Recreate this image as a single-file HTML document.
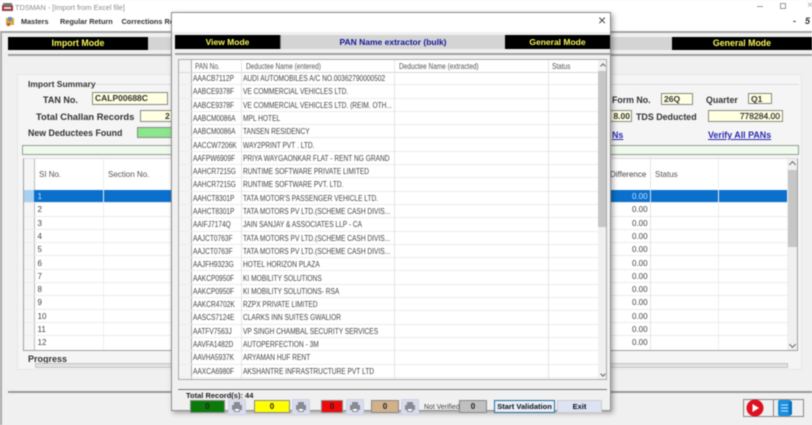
<!DOCTYPE html>
<html><head><meta charset="utf-8"><style>
html,body{margin:0;padding:0;width:812px;height:425px;overflow:hidden;background:#f0f0f0;font-family:"Liberation Sans",sans-serif;color:#222}
.a{position:absolute;white-space:nowrap}
.b{font-weight:bold}
#root{position:absolute;left:0;top:0;width:812px;height:425px;overflow:hidden;filter:blur(.4px)}
.inp{position:absolute;background:#ffffe1;border:1px solid #8a8a8a;box-sizing:border-box;font:bold 8.5px "Liberation Sans",sans-serif;color:#333;line-height:11px;white-space:nowrap}
.r{position:absolute;left:0;width:100%;height:13.3px;border-bottom:1px solid #ececec;box-sizing:border-box}
.r span{position:absolute;top:1px;font-size:8px;line-height:11px;color:#444;white-space:nowrap;transform:scaleX(.825);transform-origin:0 0}
.m{position:absolute;left:0;width:100%;height:13.3px;border-bottom:1px solid #ececec;box-sizing:border-box}
.m span{position:absolute;top:1px;font-size:8px;line-height:12px;color:#444}
.v{position:absolute;width:1px;background:#e4e4e4}
.pr{position:absolute;width:18px;height:16px;background:#d8dcec;border:1px solid #cfd3e3;box-sizing:border-box}
.pr svg{display:block;margin:1px auto}
.col{position:absolute;top:400px;height:13px;border:1px solid #888;box-sizing:border-box;text-align:center;font:bold 8px/11px "Liberation Sans",sans-serif;color:#222}
.h{font-size:8px;line-height:11px;color:#555;transform:scaleX(.81);transform-origin:0 0}
</style></head><body><div id="root">

<div class="a" style="left:0;top:0;width:812px;height:31px;background:#fff"></div>
<svg class="a" style="left:1px;top:2px" width="13" height="11"><rect x="1" y="3" width="11" height="6" fill="#9a3a3a"/><rect x="2" y="1" width="9" height="3" fill="#777"/><rect x="3" y="5" width="7" height="2" fill="#e8d8d8"/></svg>
<div class="a" style="left:15px;top:2px;font-size:7.3px;line-height:11px;color:#8b8b8b">TDSMAN - [Import from Excel file]</div>
<svg class="a" style="left:5px;top:17px" width="10" height="10"><rect x="1" y="1" width="8" height="7" fill="#d9a93a"/><rect x="3" y="0" width="4" height="4" fill="#6b8ac0"/><rect x="2" y="6" width="3" height="3" fill="#c05a3a"/></svg>
<div class="a b" style="left:21px;top:16px;font-size:7.3px;line-height:11px;color:#333">Masters</div>
<div class="a b" style="left:60px;top:16px;font-size:7.3px;line-height:11px;color:#333">Regular Return</div>
<div class="a b" style="left:121.5px;top:16px;font-size:7.3px;line-height:11px;color:#333">Corrections Re</div>
<div class="a" style="left:757px;top:6px;width:6px;height:1px;background:#999"></div>
<div class="a" style="left:780px;top:3px;width:6px;height:6px;border:1px solid #999;box-sizing:border-box"></div>
<div class="a" style="left:807px;top:0;font-size:10px;line-height:11px;color:#aaa">×</div>
<div class="a b" style="left:793px;top:16px;font-size:9px;line-height:11px;color:#333">-</div>
<div class="a b" style="left:805px;top:16px;font-size:9px;line-height:11px;color:#333;font-style:italic">5</div>

<div class="a" style="left:0;top:31px;width:812px;height:2px;background:#a5a5a5"></div>
<div class="a" style="left:0;top:31px;width:2px;height:394px;background:#a8a8a8"></div>
<div class="a" style="left:8px;top:37px;width:140px;height:13px;background:#000;color:#f6f65a;font:bold 8.8px/13px 'Liberation Sans',sans-serif;text-align:center">Import Mode</div>
<div class="a" style="left:148px;top:37px;width:524px;height:13px;background:#d4d4d4"></div>
<div class="a" style="left:672px;top:37px;width:140px;height:13px;background:#000;color:#f6f65a;font:bold 8.8px/13px 'Liberation Sans',sans-serif;text-align:center">General Mode</div>
<div class="a" style="left:8px;top:54px;width:804px;height:2px;background:#a0a0a0"></div>

<div class="a" style="left:17px;top:74px;width:785px;height:296px;background:#f5f5f5;border:1px solid #e6e6e6;box-sizing:border-box"></div>
<div class="a" style="left:28px;top:84px;width:771px;height:1px;background:#ddd"></div>
<div class="a b" style="left:28px;top:79px;font-size:8.5px;line-height:11px;background:#f5f5f5;color:#333">Import Summary</div>
<div class="a b" style="left:43px;top:94px;font-size:9px;line-height:12px;color:#333">TAN No.</div>
<div class="inp" style="left:92px;top:92px;width:76px;height:13px;padding-left:2px">CALP00688C</div>
<div class="a b" style="left:36px;top:111px;font-size:9.4px;line-height:12px;color:#333">Total Challan Records</div>
<div class="inp" style="left:140px;top:110px;width:40px;height:12px;padding-left:24px">2</div>
<div class="a b" style="left:28px;top:127px;font-size:8.8px;line-height:12px;color:#333">New Deductees Found</div>
<div class="a" style="left:137px;top:127px;width:40px;height:11px;background:#8ce68c;border:1px solid #888;box-sizing:border-box"></div>

<div class="a b" style="left:612px;top:94px;font-size:8.8px;line-height:12px;color:#333">Form No.</div>
<div class="inp" style="left:661px;top:93px;width:32px;height:12px;padding-left:2px">26Q</div>
<div class="a b" style="left:706px;top:94px;font-size:8.8px;line-height:12px;color:#333">Quarter</div>
<div class="inp" style="left:748px;top:93px;width:24px;height:11px;padding-left:2px">Q1</div>
<div class="inp" style="left:600px;top:110px;width:32px;height:12px;text-align:right;padding-right:1px">8.00</div>
<div class="a b" style="left:636px;top:111px;font-size:8.9px;line-height:12px;color:#333">TDS Deducted</div>
<div class="inp" style="left:708px;top:110px;width:75px;height:12px;text-align:right;padding-right:2px;font-weight:normal;-webkit-text-stroke:.2px #222">778284.00</div>
<div class="a b" style="left:612px;top:130px;font-size:8.9px;line-height:11px;color:#2a2ab0;text-decoration:underline">Ns</div>
<div class="a b" style="left:708px;top:130px;font-size:8.9px;line-height:11px;color:#2a2ab0;text-decoration:underline">Verify All PANs</div>

<div class="a" style="left:22px;top:145px;width:777px;height:10px;background:#eefaea;border:1px solid #999;box-sizing:border-box"></div>

<!-- main grid -->
<div class="a" style="left:23px;top:158px;width:775px;height:193px;background:#fff;border:1px solid #a0a0a0;border-top-color:#ddd;box-sizing:border-box;overflow:hidden">
  <div class="a" style="left:0;top:0;width:10px;height:191px;background:#f6f6f6"></div>
  <div class="a" style="left:0;top:31px;width:10px;height:13px;background:#a9d0f0"></div>
  <div class="a" style="left:10px;top:0;width:1px;height:191px;background:#bbb"></div>
  <div class="a" style="left:10px;top:31px;width:753px;height:13px;background:#0a70cc"></div>
  <div class="a" style="left:15px;top:10px;font-size:8px;line-height:12px;color:#555">SI No.</div>
  <div class="a" style="left:84px;top:10px;font-size:8px;line-height:12px;color:#555">Section No.</div>
  <div class="a" style="left:586px;top:10px;font-size:8px;line-height:12px;color:#444">Difference</div>
  <div class="a" style="left:631px;top:10px;font-size:8px;line-height:12px;color:#555">Status</div>
  <div class="a" style="left:0;top:31px;width:763px;height:160px">
    <div class="m" style="top:0"><span style="left:13.5px;color:#bfe0ff">1</span><span style="left:608px;color:#bfe0ff">0.00</span></div>
    <div class="m" style="top:13.3px"><span style="left:13.5px">2</span><span style="left:608px">0.00</span></div>
    <div class="m" style="top:26.6px"><span style="left:13.5px">3</span><span style="left:608px">0.00</span></div>
    <div class="m" style="top:39.9px"><span style="left:13.5px">4</span><span style="left:608px">0.00</span></div>
    <div class="m" style="top:53.2px"><span style="left:13.5px">5</span><span style="left:608px">0.00</span></div>
    <div class="m" style="top:66.5px"><span style="left:13.5px">6</span><span style="left:608px">0.00</span></div>
    <div class="m" style="top:79.8px"><span style="left:13.5px">7</span><span style="left:608px">0.00</span></div>
    <div class="m" style="top:93.1px"><span style="left:13.5px">8</span><span style="left:608px">0.00</span></div>
    <div class="m" style="top:106.4px"><span style="left:13.5px">9</span><span style="left:608px">0.00</span></div>
    <div class="m" style="top:119.7px"><span style="left:13.5px">10</span><span style="left:608px">0.00</span></div>
    <div class="m" style="top:133px"><span style="left:13.5px">11</span><span style="left:608px">0.00</span></div>
    <div class="m" style="top:146.3px;border:0"><span style="left:13.5px">12</span><span style="left:608px">0.00</span></div>
  </div>
  <div class="v" style="left:79px;top:0;height:191px;background:#eee"></div>
  <div class="v" style="left:626px;top:0;height:191px"></div>
  <div class="v" style="left:694px;top:0;height:191px;background:#eee"></div>
  <div class="a" style="left:763px;top:0;width:11px;height:191px;background:#f0f0f0"></div>
  <div class="a" style="left:764px;top:11px;width:9px;height:77px;background:#c6c6c6"></div>
  <div class="a" style="left:766px;top:3px;width:4px;height:4px;border-left:1px solid #666;border-top:1px solid #666;transform:rotate(45deg)"></div>
  <div class="a" style="left:766px;top:183px;width:4px;height:4px;border-right:1px solid #666;border-bottom:1px solid #666;transform:rotate(45deg)"></div>
</div>

<div class="a b" style="left:28px;top:353px;font-size:9px;line-height:12px;color:#333">Progress</div>
<div class="a" style="left:35px;top:363px;width:753px;height:5px;background:#e2e2e2;border:1px solid #c4c4c4;box-sizing:border-box"></div>
<div class="a" style="left:8px;top:391px;width:804px;height:2px;background:#999"></div>
<div class="a" style="left:743px;top:399px;width:31px;height:18px;border:1px solid #888;box-sizing:border-box"></div>
<div class="a" style="left:773px;top:399px;width:31px;height:18px;border:1px solid #888;box-sizing:border-box"></div>
<svg class="a" style="left:746px;top:399px" width="18" height="18"><circle cx="9" cy="9" r="8.5" fill="#e01020"/><path d="M6.5 5 L13 9 L6.5 13Z" fill="#fff"/></svg>
<svg class="a" style="left:778px;top:399px" width="16" height="18"><rect x="0" y="1" width="13" height="16" rx="2" fill="#1890e0"/><rect x="11" y="2" width="3" height="14" rx="1" fill="#0a70c0"/><path d="M3 6h7M3 9h7M3 12h7" stroke="#cfe8ff"/></svg>

<!-- dialog -->
<div class="a" style="left:171px;top:12px;width:440px;height:399px;background:#f0f0f0;border:1px solid #8c8c8c;box-sizing:border-box;box-shadow:2px 2px 5px rgba(0,0,0,.35);overflow:hidden">
  <div class="a" style="left:0;top:0;width:438px;height:19px;background:#fff"></div>
  <div class="a" style="left:426px;top:0;font-size:14px;line-height:14px;color:#444">×</div>
  <div class="a" style="left:3px;top:22px;width:105px;height:14px;background:#000;color:#f6f65a;font:bold 8.5px/14px 'Liberation Sans',sans-serif;text-align:center">View Mode</div>
  <div class="a" style="left:108px;top:22px;width:225px;height:14px;background:#d4d4d4;border-left:1px solid #888;box-sizing:border-box;color:#16169a;font:bold 8.5px/14px 'Liberation Sans',sans-serif;text-align:center">PAN Name extractor (bulk)</div>
  <div class="a" style="left:333px;top:22px;width:105px;height:14px;background:#000;color:#f6f65a;font:bold 8.5px/14px 'Liberation Sans',sans-serif;text-align:center">General Mode</div>
  <div class="a" style="left:3px;top:40px;width:435px;height:2px;background:#a0a0a0"></div>

  <div class="a" style="left:6px;top:46px;width:429px;height:321px;background:#fff;border:1px solid #aaa;box-sizing:border-box;overflow:hidden">
    <div class="a" style="left:0;top:0;width:12px;height:320px;background:#f4f4f4"></div>
    <div class="a" style="left:12px;top:0;width:1px;height:320px;background:#aaa"></div>
    <div class="a h" style="left:16px;top:1px">PAN No.</div>
    <div class="a h" style="left:67px;top:1px">Deductee Name (entered)</div>
    <div class="a h" style="left:220px;top:1px">Deductee Name (extracted)</div>
    <div class="a h" style="left:373px;top:1px">Status</div>
    <div class="a" style="left:0;top:12px;width:419px;height:1px;background:#d8d8d8"></div>
    <div class="a" style="left:0;top:12px;width:419px;height:306px">
      <div class="r" style="top:0"><span style="left:13.5px">AAACB7112P</span><span style="left:64px">AUDI AUTOMOBILES A/C NO.00362790000502</span></div>
      <div class="r" style="top:13.3px"><span style="left:13.5px">AABCE9378F</span><span style="left:64px">VE COMMERCIAL VEHICLES LTD.</span></div>
      <div class="r" style="top:26.6px"><span style="left:13.5px">AABCE9378F</span><span style="left:64px">VE COMMERCIAL VEHICLES LTD. (REIM. OTH...</span></div>
      <div class="r" style="top:39.9px"><span style="left:13.5px">AABCM0086A</span><span style="left:64px">MPL HOTEL</span></div>
      <div class="r" style="top:53.2px"><span style="left:13.5px">AABCM0086A</span><span style="left:64px">TANSEN RESIDENCY</span></div>
      <div class="r" style="top:66.5px"><span style="left:13.5px">AACCW7206K</span><span style="left:64px">WAY2PRINT PVT . LTD.</span></div>
      <div class="r" style="top:79.8px"><span style="left:13.5px">AAFPW6909F</span><span style="left:64px">PRIYA WAYGAONKAR FLAT - RENT NG GRAND</span></div>
      <div class="r" style="top:93.1px"><span style="left:13.5px">AAHCR7215G</span><span style="left:64px">RUNTIME SOFTWARE PRIVATE LIMITED</span></div>
      <div class="r" style="top:106.4px"><span style="left:13.5px">AAHCR7215G</span><span style="left:64px">RUNTIME SOFTWARE PVT. LTD.</span></div>
      <div class="r" style="top:119.7px"><span style="left:13.5px">AAHCT8301P</span><span style="left:64px">TATA MOTOR'S PASSENGER VEHICLE LTD.</span></div>
      <div class="r" style="top:133px"><span style="left:13.5px">AAHCT8301P</span><span style="left:64px">TATA MOTORS PV LTD.(SCHEME CASH DIVIS...</span></div>
      <div class="r" style="top:146.3px"><span style="left:13.5px">AAIFJ7174Q</span><span style="left:64px">JAIN SANJAY &amp; ASSOCIATES LLP - CA</span></div>
      <div class="r" style="top:159.6px"><span style="left:13.5px">AAJCT0763F</span><span style="left:64px">TATA MOTORS PV LTD.(SCHEME CASH DIVIS...</span></div>
      <div class="r" style="top:172.9px"><span style="left:13.5px">AAJCT0763F</span><span style="left:64px">TATA MOTORS PV LTD.(SCHEME CASH DIVIS...</span></div>
      <div class="r" style="top:186.2px"><span style="left:13.5px">AAJFH9323G</span><span style="left:64px">HOTEL HORIZON PLAZA</span></div>
      <div class="r" style="top:199.5px"><span style="left:13.5px">AAKCP0950F</span><span style="left:64px">KI MOBILITY SOLUTIONS</span></div>
      <div class="r" style="top:212.8px"><span style="left:13.5px">AAKCP0950F</span><span style="left:64px">KI MOBILITY SOLUTIONS- RSA</span></div>
      <div class="r" style="top:226.1px"><span style="left:13.5px">AAKCR4702K</span><span style="left:64px">RZPX PRIVATE LIMITED</span></div>
      <div class="r" style="top:239.4px"><span style="left:13.5px">AASCS7124E</span><span style="left:64px">CLARKS INN SUITES GWALIOR</span></div>
      <div class="r" style="top:252.7px"><span style="left:13.5px">AATFV7563J</span><span style="left:64px">VP SINGH CHAMBAL SECURITY SERVICES</span></div>
      <div class="r" style="top:266px"><span style="left:13.5px">AAVFA1482D</span><span style="left:64px">AUTOPERFECTION - 3M</span></div>
      <div class="r" style="top:279.3px"><span style="left:13.5px">AAVHA5937K</span><span style="left:64px">ARYAMAN HUF RENT</span></div>
      <div class="r" style="top:292.6px"><span style="left:13.5px">AAXCA6980F</span><span style="left:64px">AKSHANTRE INFRASTRUCTURE PVT LTD</span></div>
    </div>
    <div class="v" style="left:62px;top:0;height:320px"></div>
    <div class="v" style="left:215px;top:0;height:320px"></div>
    <div class="v" style="left:369px;top:0;height:320px"></div>
    <div class="a" style="left:419px;top:0;width:9px;height:320px;background:#f0f0f0"></div>
    <div class="a" style="left:419px;top:11px;width:9px;height:156px;background:#c6c6c6"></div>
    <div class="a" style="left:422px;top:4px;width:3px;height:3px;border-left:1px solid #666;border-top:1px solid #666;transform:rotate(45deg)"></div>
    <div class="a" style="left:422px;top:312px;width:3px;height:3px;border-right:1px solid #666;border-bottom:1px solid #666;transform:rotate(45deg)"></div>
  </div>

  <div class="a" style="left:6px;top:376px;width:429px;height:1px;background:#777"></div>
</div>

<div class="a b" style="left:186px;top:391px;font-size:7.5px;line-height:10px;color:#222">Total Record(s): 44</div>
<div class="col" style="left:190px;width:35px;background:#0a7a0a">0</div>
<div class="pr" style="left:228px;top:399px"><svg width="12" height="12"><path d="M3 1h6v3H3zM1 4h10v5H1zM3 7h6v4H3z" fill="#8a8a92"/><path d="M4 8h4v2H4z" fill="#fff"/></svg></div>
<div class="col" style="left:254px;width:36px;background:#ffff00">0</div>
<div class="pr" style="left:292px;top:399px"><svg width="12" height="12"><path d="M3 1h6v3H3zM1 4h10v5H1zM3 7h6v4H3z" fill="#8a8a92"/><path d="M4 8h4v2H4z" fill="#fff"/></svg></div>
<div class="col" style="left:321px;width:22px;background:#ee0a0a">0</div>
<div class="pr" style="left:346px;top:399px"><svg width="12" height="12"><path d="M3 1h6v3H3zM1 4h10v5H1zM3 7h6v4H3z" fill="#8a8a92"/><path d="M4 8h4v2H4z" fill="#fff"/></svg></div>
<div class="col" style="left:371px;width:28px;background:#d2b08a">0</div>
<div class="pr" style="left:401px;top:399px"><svg width="12" height="12"><path d="M3 1h6v3H3zM1 4h10v5H1zM3 7h6v4H3z" fill="#8a8a92"/><path d="M4 8h4v2H4z" fill="#fff"/></svg></div>
<div class="a" style="left:424px;top:401px;font-size:7.5px;line-height:11px;color:#444;transform:scaleX(.92);transform-origin:0 0">Not Verified</div>
<div class="col" style="left:459px;width:28px;background:#c0c0c0">0</div>
<div class="a b" style="left:494px;top:400px;width:61px;height:13px;background:#e6eefa;border:1px solid #2a6a9a;box-sizing:border-box;font-size:7.5px;line-height:11px;text-align:center;color:#111">Start Validation</div>
<div class="a b" style="left:557px;top:400px;width:45px;height:13px;background:#dde2f5;border:1px solid #ccc;box-sizing:border-box;font-size:7.5px;line-height:11px;text-align:center;color:#111">Exit</div>
</div></body></html>
